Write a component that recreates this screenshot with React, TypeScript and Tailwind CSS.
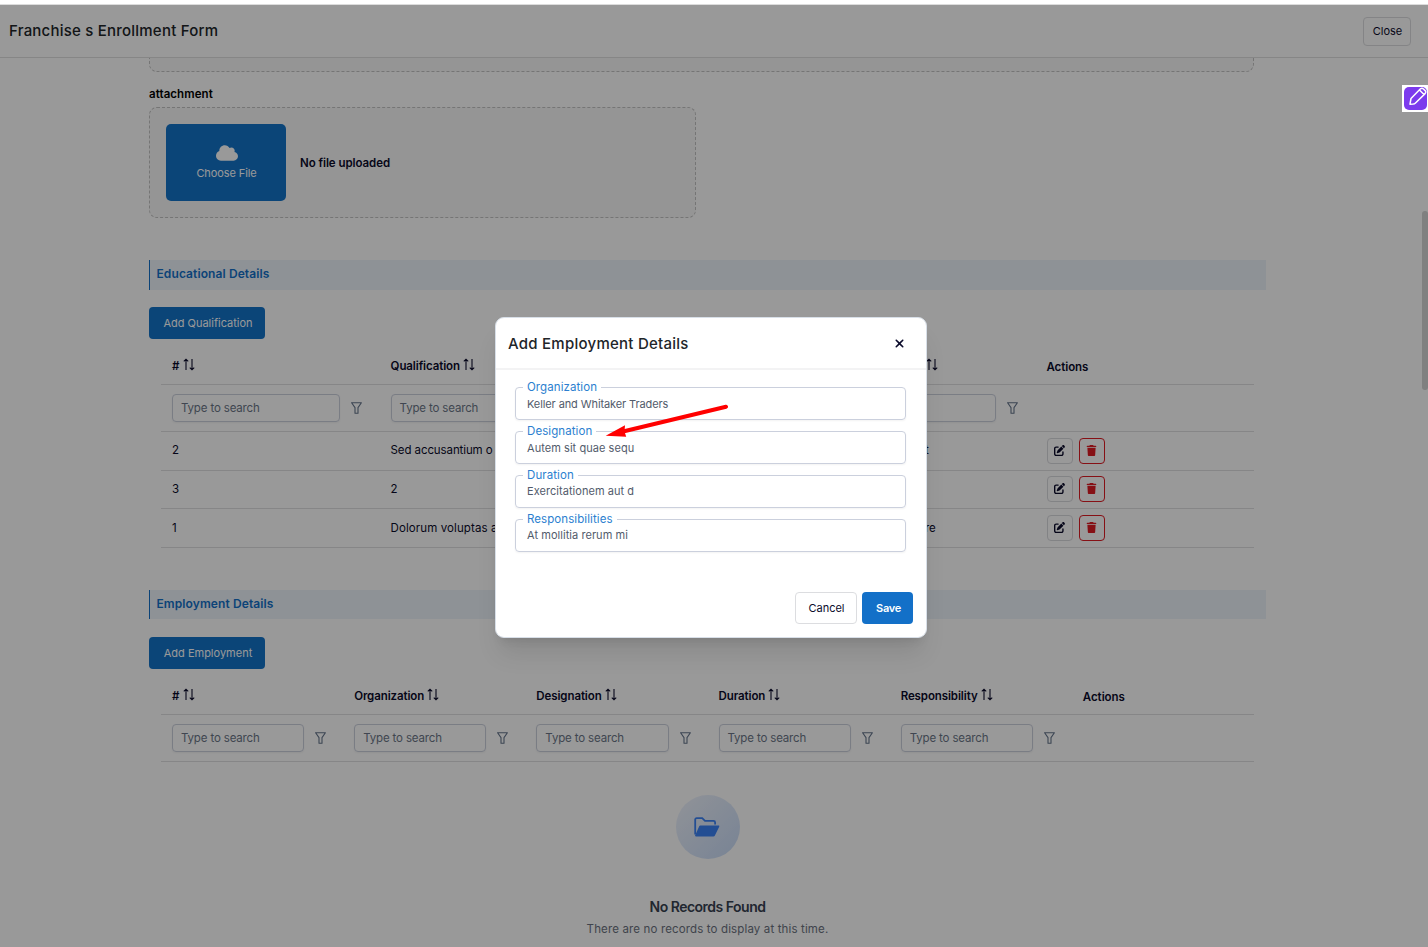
import { FaCloud, FaPenToSquare, FaTrash, FaXmark } from 'react-icons/fa6';

const qualifications = [
  { id: '2', name: 'Sed accusantium o', tracking: 'tracking-[-0.1px]', last: 't', lastWidth: 'w-[112px]' },
  { id: '3', name: '2', tracking: '', last: '', lastWidth: 'w-[112px]' },
  { id: '1', name: 'Dolorum voluptas a', tracking: 'tracking-[0.1px]', last: 're', lastWidth: 'w-[119px]' },
];

const employmentColumns = ['#', 'Organization', 'Designation', 'Duration', 'Responsibility'];

const fields = [
  { label: 'Organization', value: 'Keller and Whitaker Traders', offset: 'pt-px', tracking: 'tracking-[-0.1px]' },
  { label: 'Designation', value: 'Autem sit quae sequ', offset: 'pt-px', tracking: 'tracking-[0.05px]' },
  { label: 'Duration', value: 'Exercitationem aut d', offset: 'pb-px', tracking: 'tracking-[0.05px]' },
  { label: 'Responsibilities', value: 'At mollitia rerum mi', offset: 'pb-px', tracking: 'tracking-[0.05px]' },
];

const SortIcon = () => (
  <svg width="12" height="13" viewBox="0 0 12 13" fill="none" stroke="currentColor" strokeWidth="1.1" className="-mt-[5px] ml-[3px] shrink-0">
    <path d="M3 12V1.2M0.8 3.4L3 1.2l2.2 2.2M9 1v10.8M6.8 9.6L9 11.8l2.2-2.2" />
  </svg>
);

const FilterIcon = () => (
  <svg width="11" height="12" viewBox="0 0 11 12" fill="none" stroke="#64748b" strokeWidth="1.1" className="shrink-0">
    <path d="M0.6 0.8h9.8L7 5.6v5.6H4V5.6z" strokeLinejoin="round" />
  </svg>
);

const SearchInput = ({ placeholder = 'Type to search' }: { placeholder?: string }) => (
  <div className="flex h-7 flex-1 items-center rounded border border-[#cbd0dd] px-[8px] pt-px text-[11.5px] tracking-[-0.15px] text-[#6b7687] shadow-xs">
    {placeholder}
  </div>
);

const SectionTitle = ({ title }: { title: string }) => (
  <div className="h-full w-[1117px] border-l border-[#1370c8] bg-[#edf4fa] pl-[6.5px] text-[12px] leading-[28px] font-semibold tracking-[0.1px] text-[#1370c8]">
    {title}
  </div>
);

const AddButton = ({ title }: { title: string }) => (
  <button className="h-8 w-[116px] rounded bg-[#1373c9] pt-px pl-[2px] text-[11px] text-white">{title}</button>
);

const ColumnTitle = ({ title }: { title: string }) => (
  <div className="flex items-center pt-px pl-[11px]">
    <span className={title === '#' ? 'pr-px' : 'tracking-[-0.1px]'}>{title}</span>
    <SortIcon />
  </div>
);

export default function App() {
  return (
    <div className="relative h-[947px] w-[1428px] overflow-hidden bg-white font-['Inter',sans-serif] text-[11.5px] text-[#0b0b2b]">
      {/* === Page === */}
      <div className="flex h-full flex-col pt-[5px]">
        <header className="flex h-[53px] shrink-0 items-center justify-between border-b border-[#e0e0e0] pr-[17px] pl-[9px]">
          <h1 className="pt-px text-[15px] font-medium tracking-[0.22px] text-[#212529]">Franchise s Enrollment Form</h1>
          <button className="h-[29px] w-12 rounded border border-[#dcdde0] pl-px text-[11px]">Close</button>
        </header>

        <main className="ml-[149px]">
          <div className="h-[14px] w-[1105px] rounded-b-lg border border-t-0 border-dashed border-[#c3c3c3] bg-[#f9f9f9]" />
          <div className="mt-[13px] h-4 pt-px leading-4 font-semibold tracking-[0.08px] text-black">attachment</div>
          <div className="mt-[6px] flex h-[111px] w-[547px] items-center rounded-lg border border-dashed border-[#c3c3c3] bg-[#f9f9f9] pl-4">
            <div className="flex h-[77px] w-[120px] flex-col items-center rounded-[5px] bg-[#1373c9] pt-[18px] pl-px text-white">
              <FaCloud className="h-[22px] w-[22px]" />
              <span className="text-[11px] leading-[19px] tracking-[-0.1px]">Choose File</span>
            </div>
            <span className="ml-[14px] pt-[2px] font-semibold tracking-[-0.06px]">No file uploaded</span>
          </div>

          {/* === Education === */}
          <div className="mt-[42px] h-[30px]">
            <SectionTitle title="Educational Details" />
          </div>
          <div className="mt-[17px]">
            <AddButton title="Add Qualification" />
          </div>
          <div className="mt-[10px] ml-3 w-[1093px]">
            <div className="grid h-9 grid-cols-5 items-center border-b border-[#dfdfe2] font-semibold">
              <ColumnTitle title="#" />
              <ColumnTitle title="Qualification" />
              <div />
              <div className="flex items-center pt-px pl-[106px]">
                <SortIcon />
              </div>
              <div className="pt-[3px] pl-[11px] tracking-[-0.05px]">Actions</div>
            </div>
            <div className="grid h-[47px] grid-cols-5 items-center border-b border-[#dfdfe2]">
              {['Type to search', 'Type to search', '', ''].map((placeholder, i) => (
                <div key={i} className="flex items-center gap-[11px] pr-[17.3px] pl-[11px]">
                  <SearchInput placeholder={placeholder} />
                  <FilterIcon />
                </div>
              ))}
            </div>
            {qualifications.map((row) => (
              <div key={row.id} className="grid h-[38.66px] grid-cols-5 items-center border-b border-[#dfdfe2]">
                <div className="pl-[11px]">{row.id}</div>
                <div className={`pl-[11px] ${row.tracking}`}>{row.name}</div>
                <div />
                <div className={`${row.lastWidth} text-right`}>{row.last}</div>
                <div className="flex gap-[6px] pl-[11.6px]">
                  <button className="flex h-[26px] w-[26px] items-center justify-center rounded border border-[#d9dade] pb-px">
                    <FaPenToSquare size={11} />
                  </button>
                  <button className="flex h-[26px] w-[26px] items-center justify-center rounded border border-[#e01b24] pb-px text-[#e01b24]">
                    <FaTrash size={11} />
                  </button>
                </div>
              </div>
            ))}
          </div>

          {/* === Employment === */}
          <div className="mt-[42px] h-[29px]">
            <SectionTitle title="Employment Details" />
          </div>
          <div className="mt-[18px]">
            <AddButton title="Add Employment" />
          </div>
          <div className="mt-[10px] ml-3 w-[1093px]">
            <div className="grid h-9 grid-cols-6 items-center border-b border-[#dfdfe2] font-semibold">
              {employmentColumns.map((title) => (
                <ColumnTitle key={title} title={title} />
              ))}
              <div className="pt-[2px] pl-[11px] tracking-[-0.05px]">Actions</div>
            </div>
            <div className="grid h-[47px] grid-cols-6 items-center border-b border-[#dfdfe2]">
              {employmentColumns.map((title) => (
                <div key={title} className="flex items-center gap-[11px] pr-[17px] pl-[11px]">
                  <SearchInput />
                  <FilterIcon />
                </div>
              ))}
            </div>
            <div className="flex flex-col items-center pt-[33px]">
              <div className="flex h-16 w-16 items-center justify-center rounded-full bg-linear-to-br from-[#f1f5fd] to-[#c8dbf8]">
                <svg width="26" height="20" viewBox="0 0 26 20" className="-ml-px text-[#3b82f6]">
                  <path d="M1.2 17.5V2.6c0-.9.6-1.5 1.5-1.5h5.5l2.8 2.8h8.5c1 0 1.6.6 1.6 1.5v2" fill="none" stroke="currentColor" strokeWidth="1.8" />
                  <path d="M6.3 8.5h18.2c.7 0 1 .6.7 1.2l-4.3 8.8c-.3.7-.8 1-1.5 1H2c-.8 0-1.2-.5-.8-1.2l4-9c.2-.5.6-.8 1.1-.8z" fill="currentColor" />
                </svg>
              </div>
              <h3 className="mt-[39px] text-[14px] leading-[18px] font-semibold tracking-[-0.5px] text-[#374151]">No Records Found</h3>
              <p className="mt-1 leading-[18px] tracking-[0.14px] text-[#6b7280]">There are no records to display at this time.</p>
            </div>
          </div>
        </main>
      </div>

      {/* Scrollbar thumb */}
      <div className="absolute top-[211px] right-0 h-[179px] w-1.5 rounded-full bg-[#d5d5d5]" />

      {/* === Backdrop + modal === */}
      <div className="absolute inset-x-0 top-[4px] bottom-0 flex items-start justify-center border-t border-[#dcdcdc] bg-black/40 bg-clip-padding pr-[6px]">
        <div className="mt-[312px] flex h-[321px] w-[432px] flex-col rounded-[9px] border border-[#d8dfe8] bg-white shadow-xl">
          <div className="flex h-[52px] items-center justify-between border-b-2 border-[#f3f3f4] pr-[20px] pl-3">
            <h2 className="pt-[3px] text-[15px] font-medium tracking-[0.25px] text-[#212529]">Add Employment Details</h2>
            <FaXmark size={13} />
          </div>
          <div className="flex flex-col gap-[11px] pt-[17px] pr-5 pl-[19px]">
            {fields.map((field) => (
              <div key={field.label} className={`relative flex h-[33px] items-center rounded border border-[#cbd0dd] px-[11px] text-[11px] text-[#525b6b] shadow-xs ${field.offset}`}>
                <span className="absolute -top-[9px] left-[7px] bg-white px-1 text-[11.5px] leading-4 tracking-[0.08px] text-[#2c7fd0]">{field.label}</span>
                <span className={field.tracking}>{field.value}</span>
              </div>
            ))}
          </div>
          <div className="mt-auto flex justify-end gap-[5px] pr-[13px] pb-[13px]">
            <button className="h-8 w-[62px] rounded border border-[#dcdde0] pl-px text-[11px]">Cancel</button>
            <button className="h-8 w-[51px] rounded bg-[#1370c8] pl-[2px] text-[11px] font-semibold tracking-[-0.3px] text-white">Save</button>
          </div>
        </div>
      </div>

      {/* Pointer arrow */}
      <svg width="124" height="36" viewBox="604 403 124 36" className="absolute top-[403px] left-[604px]">
        <path d="M726 406.7L622 431.7" stroke="#ff0000" strokeWidth="4" strokeLinecap="round" />
        <path d="M605.7 435.8L625 425.3L624.5 431.5L626.2 436.8z" fill="#ff0000" />
      </svg>

      {/* Floating pen widget */}
      <div className="absolute top-[85px] right-0 h-[27px] w-[26px] bg-white pt-[2px] pl-[2px]">
        <svg width="24" height="23" viewBox="0 0 24 23" fill="none">
          <rect width="23" height="23" rx="5" fill="#7c3aed" />
          <path d="M6 17.2l1-5.7L16.5 1.8q1.5-1.2 3 .2l1.6 1.6q1.3 1.5 0 3L11.5 16q-1 1-2.3 1.1zM15.5 3l5 5" stroke="white" strokeWidth="1.5" strokeLinejoin="round" />
        </svg>
      </div>
    </div>
  );
}
